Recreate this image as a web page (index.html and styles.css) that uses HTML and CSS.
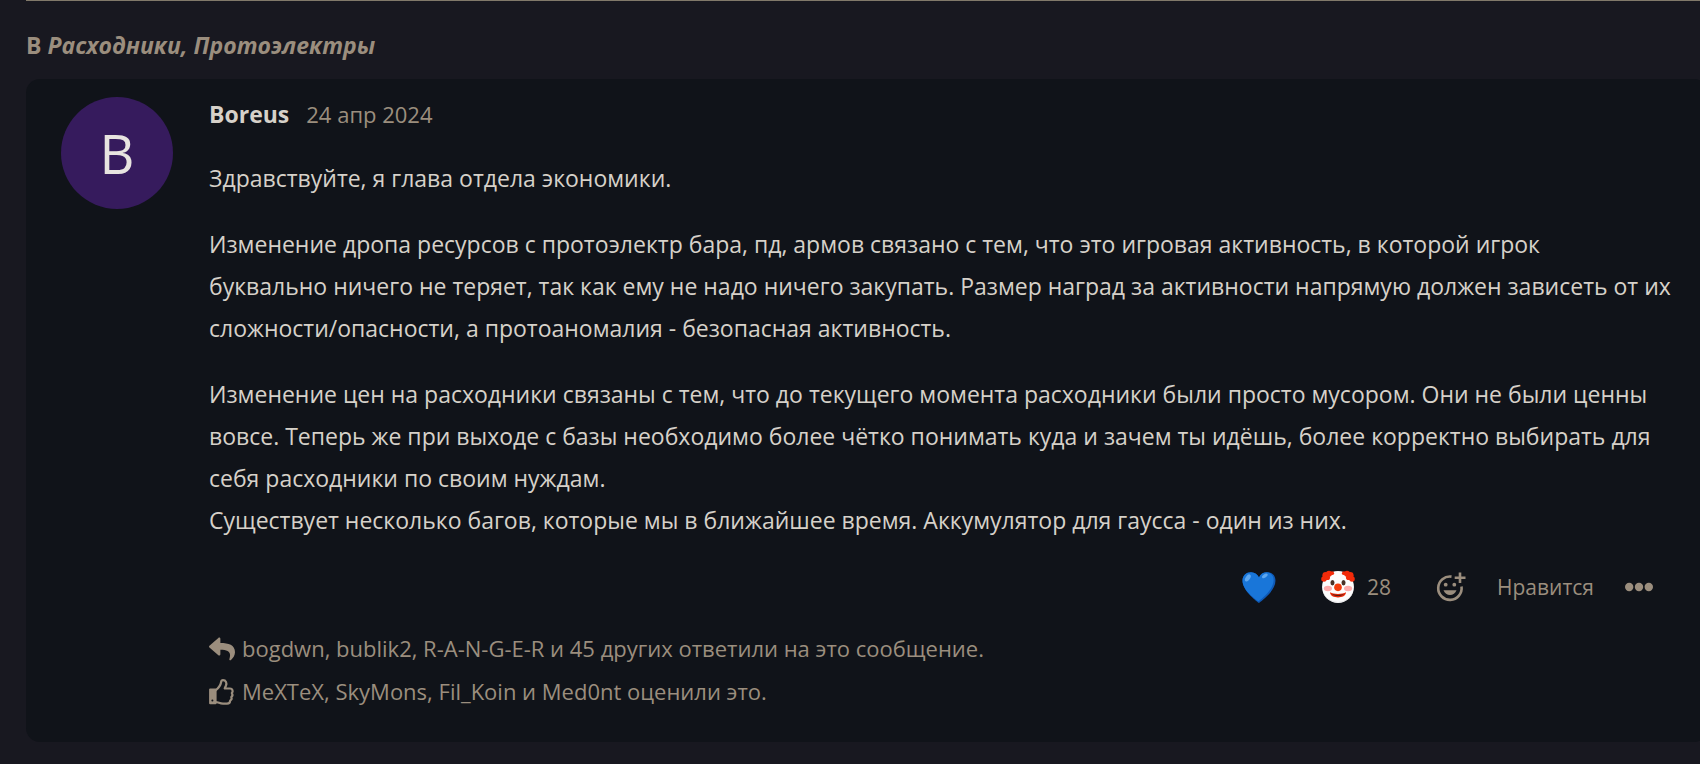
FILE: index.html
```html
<!DOCTYPE html>
<html lang="ru">
<head>
    <meta charset="UTF-8">
    <meta name="viewport" content="width=device-width, initial-scale=1.0">
    <title>Расходники, Протоэлектры</title>
    <link rel="stylesheet" href="styles.css">
</head>
<body>
    <main class="feed">
        <h2 class="topic">В <a href="#"><em>Расходники, Протоэлектры</em></a></h2>

        <article class="post">
            <a class="avatar" href="#">B</a>
            <div class="content">
                <header class="post-header">
                    <a class="author" href="#">Boreus</a>
                    <time class="date" datetime="2024-04-24">24 апр 2024</time>
                </header>

                <div class="post-body">
                    <p>Здравствуйте, я глава отдела экономики.</p>
                    <p>Изменение дропа ресурсов с протоэлектр бара, пд, армов связано с тем, что это игровая активность, в которой игрок<br>буквально ничего не теряет, так как ему не надо ничего закупать. Размер наград за активности напрямую должен зависеть от их сложности/опасности, а протоаномалия - безопасная активность.</p>
                    <p>Изменение цен на расходники связаны с тем, что до текущего момента расходники были просто мусором. Они не были ценны вовсе. Теперь же при выходе с базы необходимо более чётко понимать куда и зачем ты идёшь, более корректно выбирать для себя расходники по своим нуждам.<br>Существует несколько багов, которые мы в ближайшее время. Аккумулятор для гаусса - один из них.</p>
                </div>

                <div class="actions">
                    <button class="reaction" aria-label="Сердце">
                        <svg class="emoji" viewBox="0 0 32 32">
                            <path fill="#0f59b5" d="M16 31C12 28 .5 19 .5 10C.5 5 4 2 8.500 2C12 2 14.800 4 16 7C17.200 4 20 2 23.500 2C28 2 31.500 5 31.500 10C31.500 19 20 28 16 31Z"/>
                            <path fill="#1976d9" d="M15.500 29.500C11.500 26.500 .5 18.500 .5 10C.5 5 4 2 8.500 2C12 2 14.800 4 16 7C17.200 4 20 2.200 23 2.200C27 2.200 29.800 5 29.800 9.500C29.800 18 19.500 26.500 15.500 29.500Z"/>
                            <ellipse cx="5.500" cy="7.500" rx="3.800" ry="2" fill="#5fa8f0" transform="rotate(-55 5.500 7.500)"/>
                            <ellipse cx="21.500" cy="5.500" rx="3" ry="1.600" fill="#5fa8f0" transform="rotate(-35 21.500 5.500)"/>
                        </svg>
                    </button>
                    <button class="reaction">
                        <svg class="emoji" viewBox="0 0 32 32">
                            <circle cx="16" cy="16" r="15" fill="#fcfcfc"/>
                            <path fill="#d4d4d8" d="M2 21C5 33.500 27 33.500 30 21C27 28 21 30 16 30C11 30 5 28 2 21Z"/>
                            <g fill="#f32b0a">
                                <circle cx="2.800" cy="8.500" r="2.600"/><circle cx="4.500" cy="5" r="3.200"/>
                                <circle cx="7.500" cy="3.500" r="2.800"/><circle cx="10.500" cy="3" r="1.800"/>
                                <circle cx="6" cy="7" r="2.500"/>
                                <circle cx="29.200" cy="8.500" r="2.600"/><circle cx="27.500" cy="5" r="3.200"/>
                                <circle cx="24.500" cy="3.500" r="2.800"/><circle cx="21.500" cy="3" r="1.800"/>
                                <circle cx="26" cy="7" r="2.500"/>
                            </g>
                            <ellipse cx="6.500" cy="17.500" rx="3.800" ry="2.600" fill="#ffabab"/>
                            <ellipse cx="25.500" cy="17.500" rx="3.800" ry="2.600" fill="#ffabab"/>
                            <ellipse cx="10.800" cy="12" rx="1.900" ry="2.500" fill="#493126"/>
                            <ellipse cx="21.200" cy="12" rx="1.900" ry="2.500" fill="#493126"/>
                            <circle cx="16" cy="16.300" r="3.600" fill="#f33c0c"/>
                            <path fill="#e52808" d="M8.500 21C12 23 20 23 23.500 21C23.500 27.500 8.500 27.500 8.500 21Z"/>
                            <path fill="#572018" d="M10.500 22.600C14 23.800 18 23.800 21.500 22.600C19.500 25.200 12.500 25.200 10.500 22.600Z"/>
                        </svg>
                        <span>28</span>
                    </button>
                    <button class="action" aria-label="Добавить реакцию">
                        <svg class="add-icon" viewBox="0 0 30 30">
                            <path d="M15.500 4.600A11.700 11.700 0 1 0 25.500 14.500" fill="none" stroke="currentColor" stroke-width="2.600"/>
                            <circle cx="9.700" cy="12.700" r="1.900" fill="currentColor"/>
                            <circle cx="18.300" cy="12.700" r="1.900" fill="currentColor"/>
                            <path d="M7.500 18.200H20.500C18.500 24.500 9.500 24.500 7.500 18.200Z" fill="currentColor"/>
                            <path d="M24 .5V11M18.700 5.700H29.500" stroke="currentColor" stroke-width="2.600"/>
                        </svg>
                    </button>
                    <button class="action">Нравится</button>
                    <button class="action" aria-label="Ещё">
                        <svg class="more-icon" viewBox="0 0 28 10" fill="currentColor">
                            <circle cx="4.200" cy="5" r="4.200"/><circle cx="14" cy="5" r="4.200"/><circle cx="23.800" cy="5" r="4.200"/>
                        </svg>
                    </button>
                </div>

                <footer class="summary">
                    <a class="summary-row" href="#">
                        <svg class="summary-icon" viewBox="0 0 512 512" fill="currentColor">
                            <path d="M8.300 189.800 184.300 37.900C199.700 24.500 224 35.300 224 56V136.100C384.600 137.900 512 170.100 512 322.300C512 383.700 472.400 444.500 428.700 476.300C415 486.300 395.600 473.800 400.700 457.700C446 312.800 379.200 274.300 224 272.100V360C224 380.700 199.700 391.400 184.300 378.200L8.300 226.200C-2.800 216.600-2.800 199.300 8.300 189.800Z"/>
                        </svg>
                        <span>bogdwn, bublik2, R-A-N-G-E-R и 45 других ответили на это сообщение.</span>
                    </a>
                    <div class="summary-row">
                        <svg class="summary-icon" viewBox="0 0 26 26" fill="none" stroke="currentColor" stroke-width="2.200" stroke-linejoin="round">
                            <path d="M1.200 10.500H6.500V24.200H1.200Z" fill="currentColor"/>
                            <circle cx="3.400" cy="21.400" r="1" fill="#101319" stroke="none"/>
                            <path d="M6.500 11.500C9.500 9 11.500 7 12 3.500C12.300 1.500 13 1.200 14 1.200C17 1.200 18 4 17 6.500L15.700 9.500H21C23.500 9.500 24.500 12.500 22.800 14C23.800 15.500 23.600 17 22.300 18C22.900 19.500 22.400 21 21.200 21.500C21.200 23.500 20 24.600 18 24.600H14C10.500 24.600 9.500 23 6.500 23"/>
                        </svg>
                        <span><a href="#">MeXTeX</a>, <a href="#">SkyMons</a>, <a href="#">Fil_Koin</a> и <a href="#">Med0nt</a> оценили это.</span>
                    </div>
                </footer>
            </div>
        </article>
    </main>
</body>
</html>
```
FILE: styles.css
```css
* {
    box-sizing: border-box;
}

body {
    margin: 0;
    background-color: #181820;
    color: #d6d1c9;
    font-family: "Segoe UI", "Open Sans", "Noto Sans", sans-serif;
    font-size: 23px;
    line-height: 42px;
    overflow-x: hidden;
}

a {
    color: inherit;
    text-decoration: none;
}

.feed {
    margin: 0 -8px 0 26px;
    border-top: 1px solid #81796a;
}

.topic {
    margin: 0;
    padding: 23px 0 13px;
    color: #9b8e7e;
    font-size: 23px;
    font-weight: 700;
}

.post {
    display: flex;
    gap: 36px;
    padding: 18px 28px 29px 35px;
    background-color: #101319;
    border-radius: 14px;
}

.avatar {
    flex: none;
    display: flex;
    align-items: center;
    justify-content: center;
    width: 112px;
    height: 112px;
    border-radius: 50%;
    background-color: #361b5d;
    color: #e8e4e0;
    font-size: 54px;
}

.content {
    flex: 1;
    min-width: 0;
}

.post-header {
    display: flex;
    align-items: baseline;
    gap: 17px;
    height: 34px;
    line-height: 34px;
}

.author {
    font-weight: 700;
}

.date {
    color: #9b8e7e;
    font-size: 22px;
}

.post-body {
    padding-top: 8px;
}

.post-body p {
    margin: 18px 0 24px;
}

.actions {
    display: flex;
    align-items: center;
    justify-content: flex-end;
    gap: 31px;
    padding: 1px 27px 0 0;
}

button {
    display: flex;
    align-items: center;
    padding: 0;
    border: none;
    background: none;
    color: #9b8e7e;
    font: inherit;
    font-size: 21px;
    cursor: pointer;
}

.reaction {
    gap: 12px;
    margin-right: 14px;
}

.emoji {
    width: 34px;
    height: 34px;
}

.add-icon {
    width: 30px;
    height: 30px;
}

.more-icon {
    width: 28px;
    height: 10px;
}

.summary {
    padding-top: 19px;
    color: #9b8e7e;
    font-size: 22px;
}

.summary-row {
    display: flex;
    align-items: center;
    gap: 7px;
    line-height: 43px;
}

.summary-icon {
    width: 26px;
    height: 26px;
}
```
